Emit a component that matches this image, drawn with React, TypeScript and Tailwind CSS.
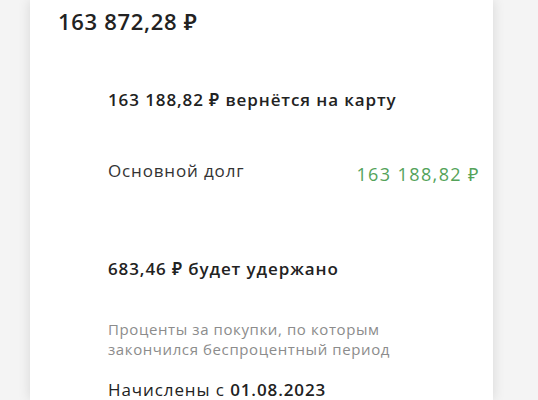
export default function App() {
  return (
    <div
      className="w-[538px] h-[400px] overflow-hidden bg-[#f4f4f4] relative"
      style={{ fontFamily: "'Open Sans', 'Noto Sans', sans-serif" }}
    >
      <div className="absolute left-[30px] top-0 w-[463px] h-[400px] bg-white shadow-[0_0_12px_rgba(0,0,0,0.12)]" />
      <div className="relative ml-[30px] w-[463px] pt-[6px]">
        <div className="pl-[28px] text-[22px] leading-[30px] font-semibold text-[#222] tracking-[0.7px]">
          163 872,28 ₽
        </div>
        <div className="pl-[78px] pr-[13px]">
          <div className="mt-[53px] text-[17px] leading-[22px] font-semibold text-[#222] tracking-[0.9px]">
            163 188,82 ₽ вернётся на карту
          </div>
          <div className="mt-[49px] flex justify-between">
            <div className="text-[17px] leading-[22px] text-[#333] tracking-[0.85px]">Основной долг</div>
            <div className="mt-[3px] text-[18px] leading-[22px] text-[#54a35a] tracking-[1.4px]">163 188,82 ₽</div>
          </div>
          <div className="mt-[73px] text-[17px] leading-[22px] font-semibold text-[#222] tracking-[0.9px]">
            683,46 ₽ будет удержано
          </div>
          <div className="mt-[39px] text-[15px] leading-[20px] text-[#8c8c8c] tracking-[0.6px]">
            Проценты за покупки, по которым
            <br />
            закончился беспроцентный период
          </div>
          <div className="mt-[20px] text-[17px] leading-[22px] text-[#222] tracking-[0.9px]">
            Начислены с <span className="font-semibold">01.08.2023</span>
          </div>
        </div>
      </div>
    </div>
  );
}
